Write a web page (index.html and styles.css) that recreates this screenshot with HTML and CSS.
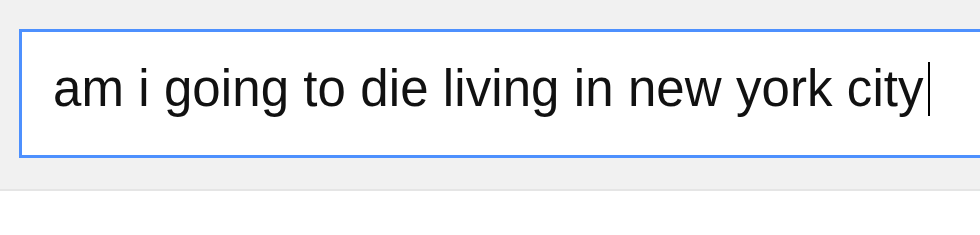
FILE: index.html
```html
<!DOCTYPE html>
<html>
<head>
<meta charset="utf-8">
<link rel="stylesheet" href="styles.css">
</head>
<body>
<div class="bar">
  <div class="search">
    <span class="query">am i going to die living in new york city</span><span class="caret"></span>
  </div>
</div>
</body>
</html>
```
FILE: styles.css
```css
html, body {
  margin: 0;
  padding: 0;
  background: #ffffff;
  overflow: hidden;
}
.bar {
  background: #f1f1f1;
  border-bottom: 2px solid #e5e5e5;
  padding: 29px 0 0 19px;
  box-sizing: border-box;
  height: 191px;
}
.search {
  width: 1000px;
  height: 129px;
  box-sizing: border-box;
  border: 3px solid #4d90fe;
  background: #ffffff;
  display: flex;
  align-items: flex-start;
  padding: 29px 0 0 31px;
}
.query {
  font-family: "Liberation Sans", Arial, sans-serif;
  font-size: 51px;
  letter-spacing: 0.08px;
  color: #111111;
  line-height: 56px;
}
.caret {
  display: inline-block;
  width: 2px;
  height: 54px;
  background: #000000;
  margin-left: 4px;
  margin-top: 1px;
}
```
